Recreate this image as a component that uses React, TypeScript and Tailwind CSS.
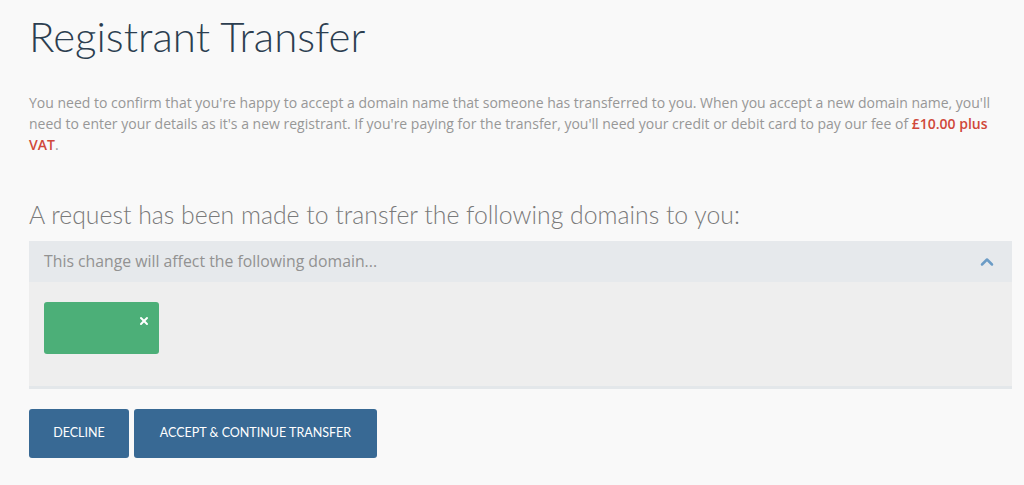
import React from 'react';
import { ChevronUp, X } from 'lucide-react';

const App: React.FC = () => {
  return (
    <div className="min-h-[485px] w-full bg-[#f9f9f9] px-[29px] pt-[10px] font-['Lato',sans-serif]">
      <h1 className="text-[42px] font-light leading-[52px] text-[#2c3e50]">Registrant Transfer</h1>
      <p className="mt-[30px] w-[990px] font-['Open_Sans',sans-serif] text-[14px] leading-[21px] text-[#979797]">
        You need to confirm that you're happy to accept a domain name that someone has transferred to you. When you
        accept a new domain name, you'll
        <br />
        need to enter your details as it's a new registrant. If you're paying for the transfer, you'll need your credit
        or debit card to pay our fee of <span className="font-semibold text-[#d0483a]">£10.00 plus</span>
        <br />
        <span className="font-semibold text-[#d0483a]">VAT</span>.
      </p>
      <h2 className="mt-[45px] text-[24.8px] font-light leading-[30px] text-[#7a7a7a]">
        A request has been made to transfer the following domains to you:
      </h2>
      <section className="mt-[11px] w-[983px] border-b-[3px] border-[#e3e7ea]">
        <div className="flex h-[41px] items-center justify-between bg-[#e6e9ec] px-[15px]">
          <span className="font-['Open_Sans',sans-serif] text-[15.8px] text-[#929292]">
            This change will affect the following domain...
          </span>
          <ChevronUp className="h-5 w-5 text-[#6b9cc6]" strokeWidth={3} />
        </div>
        <div className="h-[104px] bg-[#eeeeee] px-[15px] pt-[20px]">
          <div className="flex h-[52px] w-[115px] justify-end rounded-[3px] bg-[#4caf78] pr-[9px] pt-[13px]">
            <X className="h-3 w-3 text-white" strokeWidth={4} />
          </div>
        </div>
      </section>
      <div className="mt-[20px] flex gap-[5px]">
        <button className="h-[49px] w-[100px] rounded-[3px] bg-[#386994] text-[12.5px] uppercase text-white">
          Decline
        </button>
        <button className="h-[49px] w-[243px] rounded-[3px] bg-[#386994] text-[12.5px] uppercase text-white">
          Accept &amp; Continue Transfer
        </button>
      </div>
    </div>
  );
};

export default App;
